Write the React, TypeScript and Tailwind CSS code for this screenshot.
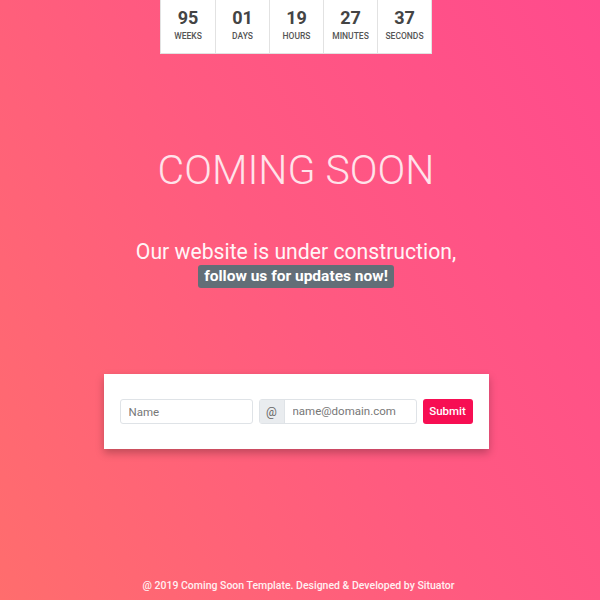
import React from "react";

const units = [
  { v: "95", l: "Weeks" },
  { v: "01", l: "Days" },
  { v: "19", l: "Hours" },
  { v: "27", l: "Minutes" },
  { v: "37", l: "Seconds" },
];

export default function App() {
  return (
    <div
      className="relative flex h-[600px] w-[600px] flex-col overflow-hidden bg-[linear-gradient(60deg,#ff6d6d_0%,#ff5a80_50%,#ff4b8d_100%)]"
      style={{ fontFamily: "Roboto, 'Noto Sans', sans-serif" }}
    >
      <div className="flex w-[592px] flex-col items-center">
        <div className="flex h-[54px] border border-t-0 border-[#e2e2e2] bg-white">
          {units.map((u, i) => (
            <div
              key={u.l}
              className={`flex w-[54px] flex-col items-center pt-[7px] ${i > 0 ? "border-l border-[#e2e2e2]" : ""}`}
            >
              <div className="text-[18px] font-bold leading-[22px] text-[#444]">{u.v}</div>
              <div className="mt-[2px] text-[8.5px] font-medium uppercase leading-[10px] text-[#555]">{u.l}</div>
            </div>
          ))}
        </div>

        <h1 className="mt-[90px] text-[41px] font-light leading-[52px] text-[#ffe3ea]">
          COMING SOON
        </h1>

        <p className="mt-[44px] text-[21.2px] leading-[24px] text-[#fff5f7]">
          Our website is under construction,
        </p>
        <span className="mt-[1px] rounded-[3px] bg-[#636e77] px-[6px] text-[15.5px] font-bold leading-[23px] text-white">
          follow us for updates now!
        </span>

        <div className="mt-[86px] flex h-[75px] w-[385px] items-center bg-white px-[16px] shadow-[0_4px_8px_rgba(0,0,0,0.25)]">
          <input
            placeholder="Name"
            className="h-[25px] w-[133px] rounded-[3px] border border-[#dfe3e7] px-[8px] text-[11.5px] text-[#495057] placeholder:text-[#777] outline-none"
          />
          <div className="ml-[6px] flex h-[25px] w-[158px] rounded-[3px] border border-[#dfe3e7]">
            <span className="flex w-[25px] items-center justify-center border-r border-[#dfe3e7] bg-[#e9ecef] text-[12px] text-[#666]">
              @
            </span>
            <input
              placeholder="name@domain.com"
              className="min-w-0 flex-1 px-[8px] text-[11.5px] text-[#495057] placeholder:text-[#777] outline-none"
            />
          </div>
          <button className="ml-[6px] h-[25px] w-[50px] rounded-[3px] bg-[#f70e53] text-[11.5px] font-medium text-white">
            Submit
          </button>
        </div>
      </div>

      <div className="mt-auto mb-[6px] w-[597px] text-center text-[10.5px] font-medium text-[#fff0f2]">
        @ 2019 Coming Soon Template. Designed &amp; Developed by Situator
      </div>
    </div>
  );
}
